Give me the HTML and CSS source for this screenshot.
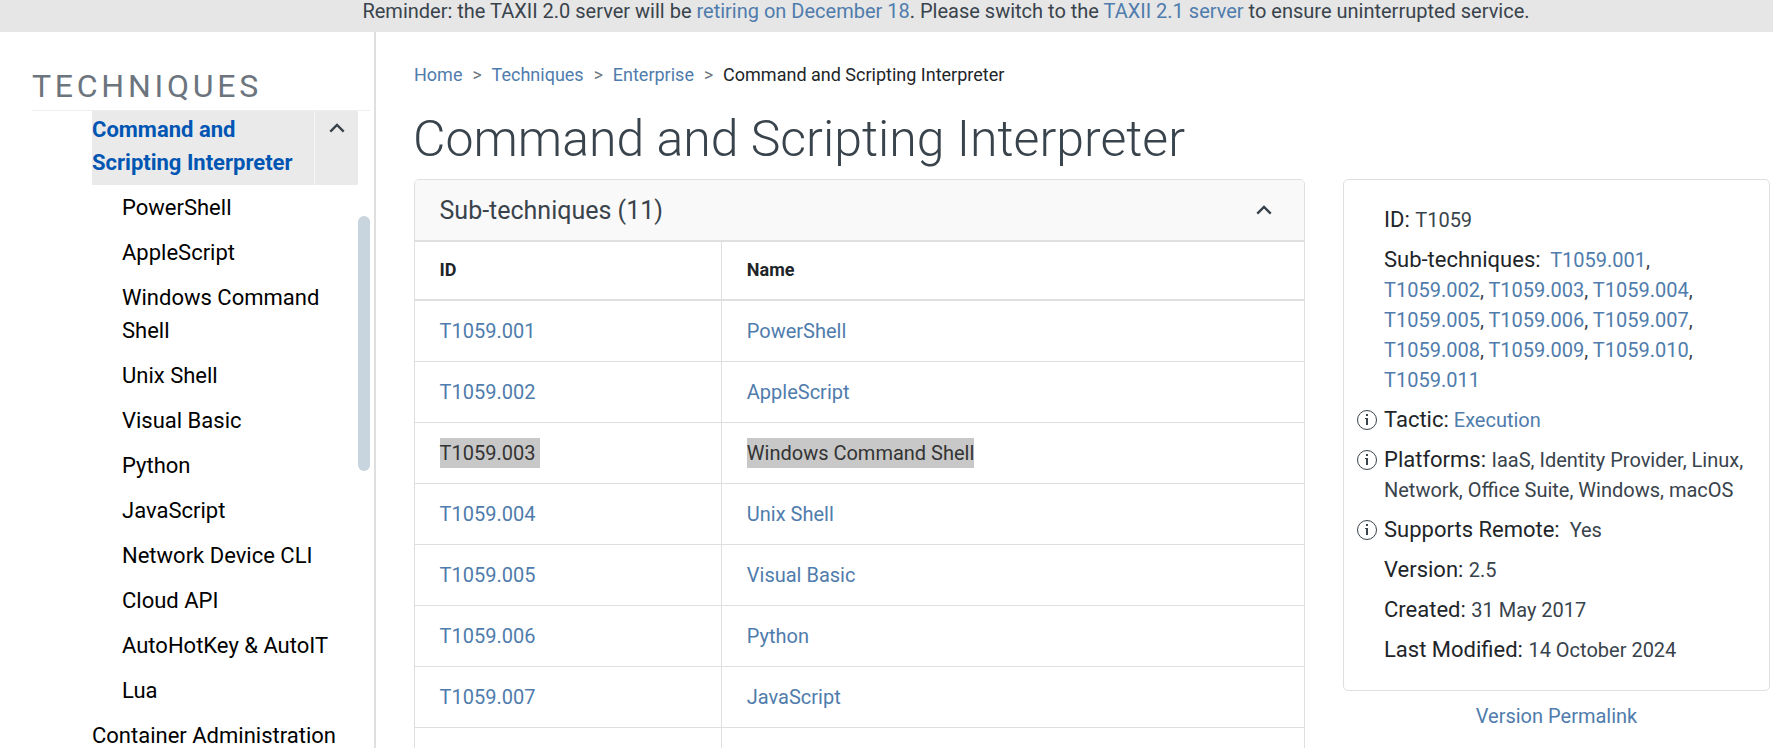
FILE: index.html
```html
<!DOCTYPE html>
<html lang="en">
<head>
<meta charset="utf-8">
<title>Command and Scripting Interpreter</title>
<link rel="stylesheet" href="styles.css">
</head>
<body>
<div class="banner"><p class="banner-text">Reminder: the TAXII 2.0 server will be <a href="#">retiring on December 18</a>. Please switch to the <a href="#">TAXII 2.1 server</a> to ensure uninterrupted service.</p></div>
<div class="layout">
  <aside class="sidebar">
    <h2 class="sidebar-title">TECHNIQUES</h2>
    <div class="sidebar-body">
      <nav class="side-nav">
        <div class="nav-current">
          <a class="nav-current-link" href="#">Command and Scripting Interpreter</a>
          <span class="nav-toggle"><svg class="chevron" viewBox="0 0 16 10"><path d="M1.3 8.7 8 2l6.7 6.7"/></svg></span>
        </div>
        <div class="nav-sub">
          <a href="#">PowerShell</a>
          <a href="#">AppleScript</a>
          <a href="#">Windows Command Shell</a>
          <a href="#">Unix Shell</a>
          <a href="#">Visual Basic</a>
          <a href="#">Python</a>
          <a href="#">JavaScript</a>
          <a href="#">Network Device CLI</a>
          <a href="#">Cloud API</a>
          <a href="#">AutoHotKey &amp; AutoIT</a>
          <a href="#">Lua</a>
        </div>
        <a href="#">Container Administration</a>
      </nav>
      <div class="scroll-track"><div class="scroll-thumb"></div></div>
    </div>
  </aside>
  <main class="main">
    <nav class="breadcrumb"><a href="#">Home</a><i>&gt;</i><a href="#">Techniques</a><i>&gt;</i><a href="#">Enterprise</a><i>&gt;</i><span>Command and Scripting Interpreter</span></nav>
    <h1 class="title">Command and Scripting Interpreter</h1>
    <div class="columns">
      <section class="subtechniques">
        <header class="sub-header"><span>Sub-techniques (11)</span><svg class="chevron" viewBox="0 0 16 10"><path d="M1.3 8.7 8 2l6.7 6.7"/></svg></header>
        <div class="row row-head"><div>ID</div><div>Name</div></div>
        <div class="row"><div><a href="#">T1059.001</a></div><div><a href="#">PowerShell</a></div></div>
        <div class="row"><div><a href="#">T1059.002</a></div><div><a href="#">AppleScript</a></div></div>
        <div class="row"><div><span class="selected">T1059.003 </span></div><div><span class="selected">Windows Command Shell</span></div></div>
        <div class="row"><div><a href="#">T1059.004</a></div><div><a href="#">Unix Shell</a></div></div>
        <div class="row"><div><a href="#">T1059.005</a></div><div><a href="#">Visual Basic</a></div></div>
        <div class="row"><div><a href="#">T1059.006</a></div><div><a href="#">Python</a></div></div>
        <div class="row"><div><a href="#">T1059.007</a></div><div><a href="#">JavaScript</a></div></div>
        <div class="row"><div></div><div></div></div>
      </section>
      <aside class="details">
        <div class="card">
          <div class="fact"><span></span><p><b>ID: </b>T1059</p></div>
          <div class="fact"><span></span><p><b>Sub-techniques:</b>&nbsp; <a href="#">T1059.001</a>, <a href="#">T1059.002</a>, <a href="#">T1059.003</a>, <a href="#">T1059.004</a>, <a href="#">T1059.005</a>, <a href="#">T1059.006</a>, <a href="#">T1059.007</a>, <a href="#">T1059.008</a>, <a href="#">T1059.009</a>, <a href="#">T1059.010</a>, <a href="#">T1059.011</a></p></div>
          <div class="fact"><svg class="info" viewBox="0 0 20 20"><circle cx="10" cy="10" r="9.5"/><path d="M9 4h2v2H9zM8 8h3v7H9V9H8z"/></svg><p><b>Tactic:</b> <a href="#">Execution</a></p></div>
          <div class="fact"><svg class="info" viewBox="0 0 20 20"><circle cx="10" cy="10" r="9.5"/><path d="M9 4h2v2H9zM8 8h3v7H9V9H8z"/></svg><p><b>Platforms: </b>IaaS, Identity Provider, Linux, Network, Office Suite, Windows, macOS</p></div>
          <div class="fact"><svg class="info" viewBox="0 0 20 20"><circle cx="10" cy="10" r="9.5"/><path d="M9 4h2v2H9zM8 8h3v7H9V9H8z"/></svg><p><b>Supports Remote:</b>&nbsp; Yes</p></div>
          <div class="fact"><span></span><p><b>Version: </b>2.5</p></div>
          <div class="fact"><span></span><p><b>Created: </b>31 May 2017</p></div>
          <div class="fact"><span></span><p><b>Last Modified: </b>14 October 2024</p></div>
        </div>
        <a class="permalink" href="#">Version Permalink</a>
      </aside>
    </div>
  </main>
</div>
</body>
</html>
```
FILE: styles.css
```css
* { box-sizing: border-box; }
html, body { height: 100%; }
body {
  margin: 0;
  overflow: hidden;
  display: flex;
  flex-direction: column;
  font: 20px/30px Roboto, sans-serif;
  color: #39434c;
  background: #fff;
}
a { color: #4f7cac; text-decoration: none; }
p { margin: 0; }

.banner {
  flex: none;
  height: 32px;
  padding-left: 119px;
  overflow: hidden;
  background: #e6e6e6;
  text-align: center;
}
.banner-text { margin-top: -4px; }

.layout { flex: 1; display: flex; min-height: 0; overflow: hidden; }

.sidebar {
  flex: none;
  width: 376px;
  padding: 30px 4px 0 32px;
  border-right: 2px solid #dfdfdf;
  display: flex;
  flex-direction: column;
}
.sidebar-title {
  flex: none;
  height: 49px;
  margin: 0;
  border-bottom: 1px solid #eee;
  font-size: 32px;
  line-height: 48px;
  font-weight: 400;
  letter-spacing: 3.75px;
  color: #6c757d;
}
.sidebar-body { flex: 1; min-height: 0; display: flex; overflow: hidden; }
.side-nav { width: 326px; padding-left: 60px; font-size: 22px; line-height: 33px; }
.side-nav a { display: block; padding: 6px 0; color: #000; }
.nav-sub { padding-left: 30px; }
.nav-current { display: flex; margin-top: -4px; background: #eaeaea; }
.side-nav .nav-current-link {
  flex: 1;
  color: #0156b3;
  font-weight: 700;
  border-right: 1px solid #f6f6f6;
}
.nav-toggle { width: 43px; padding: 16px 0 0 14px; line-height: 0; }
.chevron { width: 16px; height: 10px; fill: none; stroke: #39434c; stroke-width: 2.4; }
.scroll-track { width: 12px; padding-top: 105px; }
.scroll-thumb { height: 255px; border-radius: 6px; background: #c8d5df; }

.main { flex: 1; min-width: 0; padding: 29px 3px 0 38px; }
.breadcrumb { height: 27px; font-size: 18px; line-height: 27px; }
.breadcrumb i { margin: 0 10px; font-style: normal; color: #6c757d; font-size: 17.5px; }
.breadcrumb span { color: #212529; }
.title {
  margin: 21px 0 0 -1px;
  height: 70px;
  font-size: 50px;
  line-height: 60px;
  font-weight: 300;
}
.columns { display: flex; gap: 38px; align-items: flex-start; }

.subtechniques { width: 891px; border: 1px solid #dfdfdf; border-radius: 5px 5px 0 0; overflow: hidden; }
.sub-header {
  display: flex;
  align-items: center;
  justify-content: space-between;
  height: 62px;
  padding: 0 32px 0 24.5px;
  border-bottom: 2px solid #dfdfdf;
  background: #f9f9f9;
  font-size: 25px;
}
.sub-header span { padding-top: 2px; }
.row { display: grid; grid-template-columns: 307px 1fr; border-bottom: 1px solid #dfdfdf; }
.row > div { min-height: 60px; padding: 15px 24.8px; }
.row > div:first-child { padding-left: 24.5px; border-right: 1px solid #dfdfdf; }
.row-head { border-bottom-width: 2px; color: #212529; font-size: 18px; line-height: 27px; font-weight: 700; }
.row.row-head > div { min-height: 57px; padding-top: 14px; padding-bottom: 16px; }
.selected { display: inline-block; white-space: pre; vertical-align: top; background: #c8c8c8; color: #333; }

.details { flex: 1; text-align: center; }
.card {
  padding: 25px 24px 25px 13px;
  border: 1px solid #dfdfdf;
  border-radius: 5px;
  text-align: left;
}
.fact { display: grid; grid-template-columns: 27px 1fr; margin-bottom: 10px; }
.fact:last-child { margin-bottom: 0; }
.fact b { font-size: 22px; font-weight: 400; color: #212529; }
.info { width: 20px; height: 20px; margin-top: 5px; }
.info circle { fill: none; stroke: #39434c; }
.info path { fill: #39434c; }
.permalink { display: inline-block; margin-top: 10px; }
```
